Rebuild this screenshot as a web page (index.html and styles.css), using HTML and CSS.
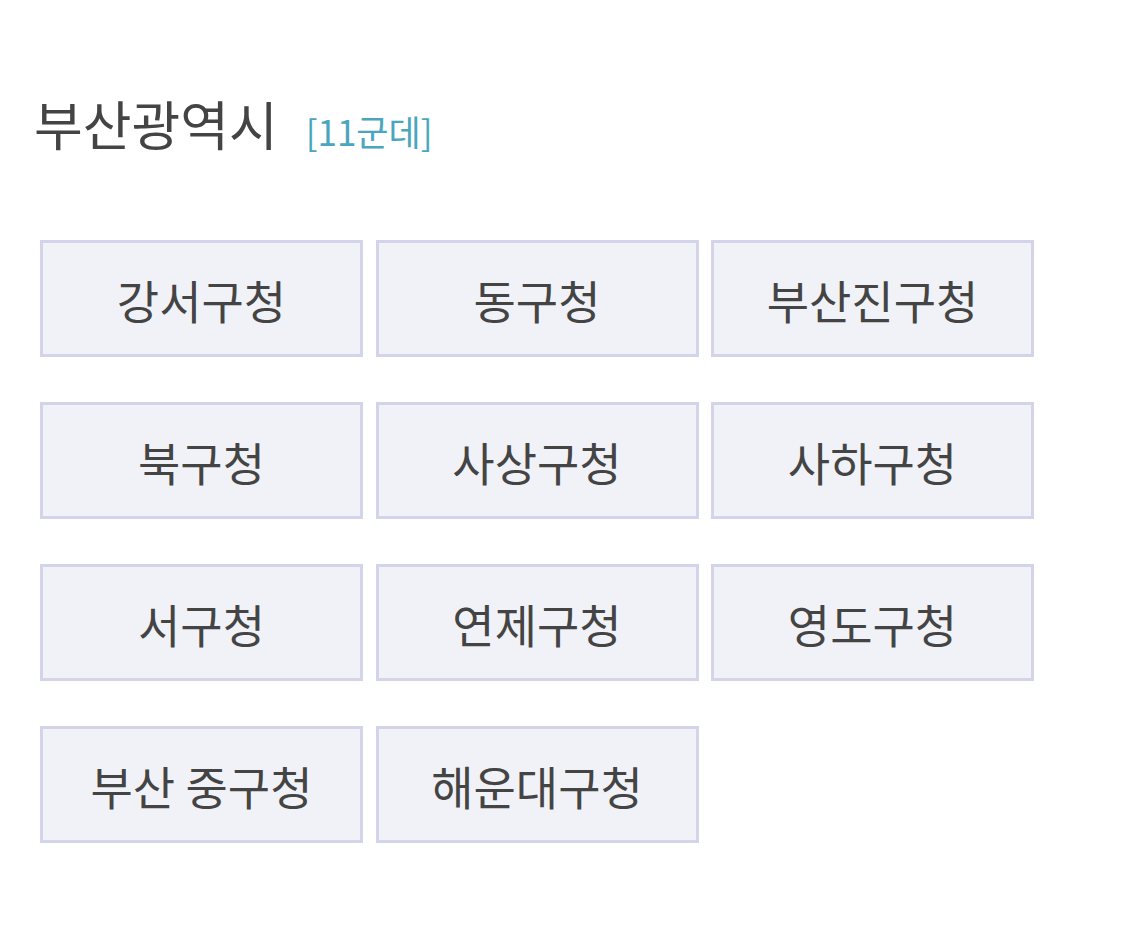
FILE: index.html
```html
<html>
<head>
  <meta charset="UTF-8">
  <title>부산광역시</title>
  <link rel="stylesheet" href="styles.css">
</head>
<body>
  <div class="region">
    <h2 class="title">부산광역시 <span class="count">[11군데]</span></h2>
    <div class="list">
      <div class="item">강서구청</div>
      <div class="item">동구청</div>
      <div class="item">부산진구청</div>
      <div class="item">북구청</div>
      <div class="item">사상구청</div>
      <div class="item">사하구청</div>
      <div class="item">서구청</div>
      <div class="item">연제구청</div>
      <div class="item">영도구청</div>
      <div class="item">부산 중구청</div>
      <div class="item">해운대구청</div>
    </div>
  </div>
</body>
</html>
```

FILE: styles.css
```css
body {
  font-family: "Noto Sans CJK KR", "Noto Sans", sans-serif;
  background: #fff;
  margin: 0;
  color: #444;
}
.region {
  padding: 88px 0 0 34px;
}
.title {
  margin: 0;
  font-size: 53px;
  font-weight: 400;
  line-height: 70px;
  color: #444;
}
.count {
  font-size: 35px;
  color: #4aa6be;
  margin-left: 16px;
}
.list {
  display: grid;
  grid-template-columns: repeat(3, 323px);
  column-gap: 12.5px;
  row-gap: 45px;
  margin: 74px 0 0 6px;
}
.item {
  height: 111px;
  background: #f1f2f7;
  border: 3px solid #d3d4e9;
  display: flex;
  align-items: center;
  justify-content: center;
  font-size: 46px;
  color: #444;
}
```
